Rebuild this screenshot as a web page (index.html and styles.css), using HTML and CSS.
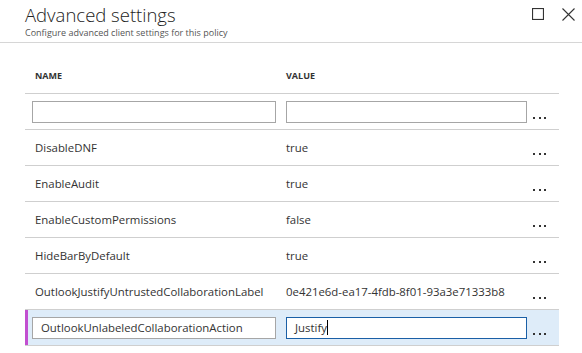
FILE: index.html
```html
<!DOCTYPE html>
<html lang="en">
<head>
  <meta charset="UTF-8">
  <title>Advanced settings</title>
  <link rel="stylesheet" href="styles.css">
</head>
<body>
  <div class="blade-header">
    <div class="titles">
      <div class="title">Advanced settings</div>
      <div class="subtitle">Configure advanced client settings for this policy</div>
    </div>
    <div class="window-btns">
      <svg width="12" height="12" viewBox="0 0 12 12"><rect x="0.5" y="0.5" width="11" height="11" fill="none" stroke="#333" stroke-width="1.2"/></svg>
      <svg width="13" height="13" viewBox="0 0 13 13"><path d="M0.5 0.5 L12.5 12.5 M12.5 0.5 L0.5 12.5" stroke="#333" stroke-width="1.1"/></svg>
    </div>
  </div>

  <div class="settings">
    <div class="row head">
      <div class="cell">NAME</div>
      <div class="cell val">VALUE</div>
      <div></div>
    </div>

    <div class="row">
      <input class="box" type="text">
      <input class="box" type="text">
      <div class="more"><i></i><i></i><i></i></div>
    </div>

    <div class="row">
      <div class="cell">DisableDNF</div>
      <div class="cell val">true</div>
      <div class="more"><i></i><i></i><i></i></div>
    </div>
    <div class="row">
      <div class="cell">EnableAudit</div>
      <div class="cell val">true</div>
      <div class="more"><i></i><i></i><i></i></div>
    </div>
    <div class="row">
      <div class="cell">EnableCustomPermissions</div>
      <div class="cell val">false</div>
      <div class="more"><i></i><i></i><i></i></div>
    </div>
    <div class="row">
      <div class="cell">HideBarByDefault</div>
      <div class="cell val">true</div>
      <div class="more"><i></i><i></i><i></i></div>
    </div>
    <div class="row">
      <div class="cell">OutlookJustifyUntrustedCollaborationLabel</div>
      <div class="cell val">0e421e6d-ea17-4fdb-8f01-93a3e71333b8</div>
      <div class="more"><i></i><i></i><i></i></div>
    </div>

    <div class="row selected">
      <input class="box" type="text" value="OutlookUnlabeledCollaborationAction">
      <div class="box focused">Justify<span class="caret"></span></div>
      <div class="more"><i></i><i></i><i></i></div>
    </div>
  </div>
</body>
</html>
```

FILE: styles.css
```css
body {
  margin: 0;
  background: #fff;
  color: #333;
  font-family: "Open Sans", "Noto Sans", sans-serif;
}
.blade-header {
  display: flex;
  justify-content: space-between;
  height: 42px;
  padding: 0 7px 0 25px;
  border-bottom: 1px solid #d6d6d6;
}
.title {
  font-size: 18.5px;
  line-height: 22px;
  margin-top: 4px;
  color: #222;
  font-weight: 300;
}
.subtitle {
  font-size: 9px;
  line-height: 12px;
  color: #555;
  margin-top: 1px;
}
.window-btns {
  display: flex;
  gap: 18px;
  padding-top: 8px;
}
.settings {
  margin: 0 23px 0 25px;
}
.row {
  display: grid;
  grid-template-columns: 244px 241px 1fr;
  column-gap: 10px;
  align-items: center;
  height: 35px;
  padding-left: 7px;
  border-bottom: 1px solid #cfcfcf;
  font-size: 11.4px;
}
.row.head {
  height: 38px;
  align-items: end;
  padding-top: 12px;
  font-size: 9px;
  font-weight: 700;
  color: #333;
}
.row.head .cell {
  padding-bottom: 11px;
}
.cell {
  padding-left: 3px;
  white-space: nowrap;
}
.cell.val {
  padding-left: 0;
}
.box {
  box-sizing: border-box;
  height: 22px;
  width: 100%;
  margin: 0;
  border: 1px solid #a6a6a6;
  background: #fff;
  font: inherit;
  color: #333;
  padding: 0 8px;
  line-height: 20px;
  outline: none;
}
.box.focused {
  border-color: #1a5fa6;
  border-width: 1.5px;
}
.caret {
  display: inline-block;
  width: 1px;
  height: 15px;
  background: #000;
  vertical-align: -3px;
}
.more {
  display: flex;
  gap: 3.5px;
  margin-left: -4px;
  padding-top: 12px;
}
.more i {
  width: 2px;
  height: 2px;
  background: #333;
}
.row.selected {
  background: #deecf9;
  box-shadow: inset 3px 0 0 #c24fd0;
}
```
